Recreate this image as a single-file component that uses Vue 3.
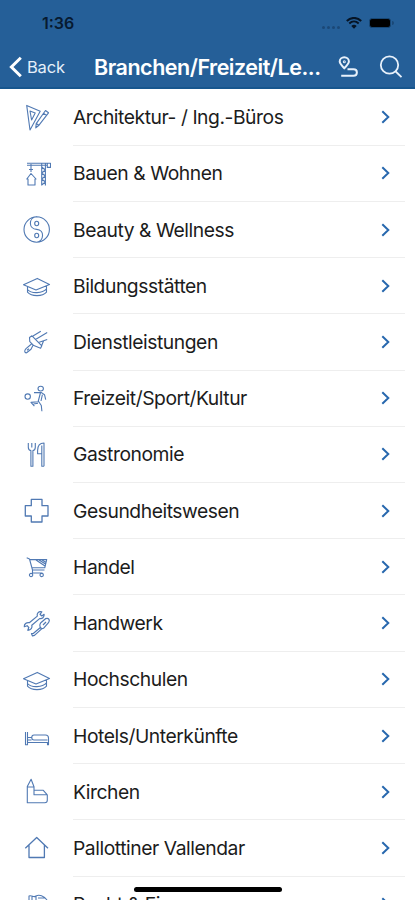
<script setup>
import { ref } from 'vue'

const cap = 'M.5 12.8 14.3 6.4l12.2 6L13 18zM4.5 15v5.2c4 4.6 15 4.6 19 0v-6M4.5 17.5c4 4.6 15 4 19-.6'

const categorias = ref([
    { nome: 'Architektur- / Ing.-Büros', icon: 'M3.7 1.4 7 26 17.2 7.2zM7 7l1.6 9 3.6-7zM22.5 6.5l3 2.3L16 21.2l-3.2 2.6.4-4.2zM13.3 19.5l2.8 2M20.5 9.2l3 2.2' },
    { nome: 'Bauen & Wohnen', icon: 'M4 3.2h23.5v4.2h-3.2V3.4M4 5.3h20M18.7 3v22.5M22.4 3v22.5M18.7 7l3.7 3-3.7 3 3.7 3-3.7 3 3.7 3-3.7 3M8 4v8M6 9.5h4M8 13.5 3.8 19H5v6h7v-6h1z' },
    { nome: 'Beauty & Wellness', icon: 'M1 13.5a12.7 12.7 0 1 0 25.4 0 12.7 12.7 0 1 0-25.4 0M13.7.8C5 1.5 5.5 13 13.7 13.4 22 13.8 21 25 13.7 26.2M11.7 7.5a2 2.2 0 1 0 4 0 2 2.2 0 1 0-4 0M11.7 19.5a2 2.2 0 1 0 4 0 2 2.2 0 1 0-4 0' },
    { nome: 'Bildungsstätten', icon: cap },
    { nome: 'Dienstleistungen', icon: 'M6.5 9.5 9 7.8l9.8 10-1.2 2.4-6.8-2.6-4-4zM10 8l7.8-4.8M12.5 11.5 24.2 4.5M15.5 14.5l8.7-3M18.5 18l2-5M8.5 16 3 20.6c-2 2-1.5 4.5.6 4.2L8 21.3l2-4M4 22.3l2-1.5' },
    { nome: 'Freizeit/Sport/Kultur', icon: 'M15 3.6a2.7 2.4 0 1 0 5.4 0 2.7 2.4 0 1 0-5.4 0M2 11.6a2.7 2.7 0 1 0 5.4 0 2.7 2.7 0 1 0-5.4 0M11 7.6h7.5l3 2.1 1.2 5M17.4 8 15.3 16l3 4.5.6 5.8M19.4 9.7 18 16M15.3 16.8 8 17.4l3.4 3.8M15 18.3l-4.5.7' },
    { nome: 'Gastronomie', icon: 'M5.3 2v4.2c0 2 1.3 3.2 2.6 3.4v15.7h2V9.6c1.2-.2 2.4-1.4 2.4-3.4V2M8.8 2v4.5M21 25.3V2c-4 0-6.4 3-6.4 7.5v3.2h3.8M18.8 4.5v20.8H21' },
    { nome: 'Gesundheitswesen', icon: 'M8.3 2.4H19v6.3h6V19h-6v6H8.3v-6h-6V8.7h6z', peso: 1.3 },
    { nome: 'Handel', icon: 'M3.7 4.8 6.5 6l3 11h12M7 6.6h16.7l-2 8.5M9 14.8h12.5M13 7l9 6M16 7l6.5 4M19 7l4 2.5M9.5 17v3h10M6.4 22a1.7 1.6 0 1 0 3.4 0 1.7 1.6 0 1 0-3.4 0M17 22a1.7 1.6 0 1 0 3.4 0 1.7 1.6 0 1 0-3.4 0' },
    { nome: 'Handwerk', icon: 'M18.8 1.8c-3.2-.8-5.2 1.5-4.5 4.3l-8 6.6c-3-.5-5.2 1.4-5 4l2.8-1 1.7 1.8-1 2.8c3.2-.2 4.8-2.5 4-5l7.8-6.7c2.7.5 4.8-1.4 4.5-4.3L18.8 6 17 4.3zM17.5 13l5-4.3c3.5-1 4.8 1.3 3 4l-5 5.6c-2.8 1-5-1.8-3-5.3M18 17l-7.5 6.3-2 .4 1 2.2 2-.5 7.7-7M20 15l3-3', peso: 1.2 },
    { nome: 'Hochschulen', icon: cap },
    { nome: 'Hotels/Unterkünfte', icon: 'M2.5 10v12.8h2v-2.3h20v2.3h1V16c0-2-1-3-3-3H11c-3 0-3 5 0 5h13.5M4.5 10v8h4M4.5 18v2.5M9 15.5H5' },
    { nome: 'Kirchen', icon: 'M4.3 24.8V8.5l3.8-7.2L11 8.8v8h13.3v5.5c0 1.5-1 2.5-2.5 2.5zM11 12.3h9.3l4 4.5M4.5 9H11' },
    { nome: 'Pallottiner Vallendar', icon: 'M2.3 14.2 13.7 3.5 25 14.2M6 11v12.5h15.4V11', peso: 1.3 },
    { nome: 'Recht & Finanzen', icon: 'M6 9V5c3-1 5 2 7 0 3-1.6 8-.4 11 4M9 5.5V9M13 5.5V10M15 7h7' },
])
</script>

<template>
    <div class="app">
        <header>
            <div class="status">
                <span class="hora">1:36</span>
                <div class="status-icons">
                    <span class="sinal"><i></i><i></i><i></i><i></i></span>
                    <svg class="wifi" width="16" height="12" viewBox="0 0 16 12">
                        <path d="M.8 4C5-.1 11-.1 15.2 4M3.3 6.5c2.8-2.6 6.6-2.6 9.4 0" />
                        <path class="ponto" d="M5.3 8.9c1.7-1.5 3.7-1.5 5.4 0L8 11.7z" />
                    </svg>
                    <span class="bateria"></span>
                    <span class="polo"></span>
                </div>
            </div>
            <nav>
                <svg class="voltar" width="14" height="22" viewBox="0 0 14 22"><path d="M11.8 1.8 2.4 11l9.4 9.2" /></svg>
                <span class="back">Back</span>
                <h1>Branchen/Freizeit/Le...</h1>
                <svg class="rota" width="20" height="22" viewBox="0 0 20 22">
                    <path d="M6.3 12.2C3.8 9.7 1.7 7.6 1.7 5.5a4.6 4.3 0 0 1 9.2 0c0 2.1-2.1 4.2-4.6 6.7z" />
                    <path d="M9.5 13.3h6c4.5 0 4.5 6.4 0 6.4H3.2" />
                    <circle cx="6.3" cy="5.7" r=".5" />
                </svg>
                <svg class="busca" width="24" height="24" viewBox="0 0 24 24"><circle cx="10.5" cy="10" r="8.7" /><path d="m16.7 16.5 5.8 5.7" /></svg>
            </nav>
        </header>

        <ul class="lista">
            <li v-for="item in categorias" :key="item.nome">
                <svg class="icone" width="28" height="28" viewBox="0 0 28 28"><path :d="item.icon" :stroke-width="item.peso || 1.1" /></svg>
                <div class="linha">
                    <span>{{ item.nome }}</span>
                    <svg class="seta" width="10" height="14" viewBox="0 0 10 14"><path d="m1.3 1.2 6 5.8-6 5.8" /></svg>
                </div>
            </li>
        </ul>
        <div class="home"></div>
    </div>
</template>

<style>
body {
    margin: 0;
    overflow: hidden;
}
</style>

<style scoped>
.app {
    position: relative;
    width: 415px;
    height: 900px;
    overflow: hidden;
    background: #fff;
    font-family: Inter, "Liberation Sans", sans-serif;
}

svg {
    display: block;
    flex: none;
    fill: none;
}

header {
    box-sizing: border-box;
    height: 88.5px;
    background: #255f98;
    border-bottom: 2px solid #17568e;
}

.status {
    display: flex;
    justify-content: space-between;
    align-items: center;
    height: 46px;
    padding: 0 21px 0 42px;
}

.hora {
    font-size: 16px;
    font-weight: 600;
    color: #071a30;
}

.status-icons {
    display: flex;
    align-items: center;
}

.sinal {
    display: flex;
    gap: 2px;
    padding: 8px 6px 0 0;
}

.sinal i {
    width: 3px;
    height: 3px;
    border-radius: 50%;
    background: #1b4877;
}

.wifi {
    stroke: #061425;
    stroke-width: 2;
}

.wifi .ponto {
    fill: #061425;
    stroke: none;
}

.bateria {
    width: 20px;
    height: 8px;
    margin-left: 7px;
    border: 1px solid #174775;
    border-radius: 3px;
    background: #000;
}

.polo {
    width: 2px;
    height: 4px;
    margin-left: 1px;
    border-radius: 0 2px 2px 0;
    background: #1b4877;
}

nav {
    display: flex;
    align-items: center;
    height: 41px;
    padding-left: 9px;
    color: #fff;
}

.voltar {
    stroke: #fff;
    stroke-width: 3;
}

.back {
    width: 67px;
    margin-left: 4px;
    font-size: 16.5px;
    letter-spacing: -0.2px;
    color: #e6effa;
}

h1 {
    width: 244px;
    margin: 0;
    font-size: 21.5px;
    font-weight: 600;
    letter-spacing: -0.48px;
    white-space: nowrap;
}

.rota,
.busca {
    stroke: #e8f1fb;
    stroke-width: 2;
}

.busca {
    margin-left: 21px;
    stroke-width: 1.8;
}

.lista {
    margin: 0;
    padding: 1px 0 0;
    list-style: none;
}

li {
    display: flex;
    align-items: center;
    height: 56.23px;
    padding: 0 10px 0 23px;
}

.icone {
    margin-right: 22px;
    stroke: #5079b3;
    stroke-linejoin: round;
}

.linha {
    display: flex;
    flex: 1;
    align-items: center;
    justify-content: space-between;
    box-sizing: border-box;
    height: 100%;
    padding-right: 14px;
    border-bottom: 1px solid #eee;
    font-size: 19.3px;
    letter-spacing: -0.45px;
    color: #1c1c1c;
}

.seta {
    stroke: #2868ae;
    stroke-width: 2;
}

.home {
    position: absolute;
    left: 134px;
    bottom: 8px;
    width: 148px;
    height: 5px;
    border-radius: 3px;
    background: #000;
}
</style>
